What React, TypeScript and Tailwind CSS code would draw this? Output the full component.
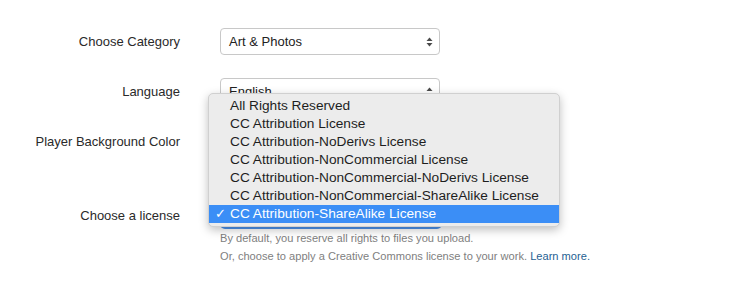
import React from "react";

function Arrows({ upOnly = false }: { upOnly?: boolean }) {
  return (
    <svg width="7" height="11" viewBox="0 0 7 11" className="absolute right-[6px] top-1/2 -translate-y-1/2">
      <path d="M3.5 1 L6.5 4.5 L0.5 4.5 Z" fill="#4a4a4a" />
      {!upOnly && <path d="M3.5 10 L6.5 6.5 L0.5 6.5 Z" fill="#4a4a4a" />}
    </svg>
  );
}

const items = [
  "All Rights Reserved",
  "CC Attribution License",
  "CC Attribution-NoDerivs License",
  "CC Attribution-NonCommercial License",
  "CC Attribution-NonCommercial-NoDerivs License",
  "CC Attribution-NonCommercial-ShareAlike License",
  "CC Attribution-ShareAlike License",
];

export default function App() {
  return (
    <div
      className="relative w-[747px] h-[292px] bg-white overflow-hidden text-[13px] text-[#2a2a2a]"
      style={{ fontFamily: '"Liberation Sans", Arial, sans-serif' }}
    >
      <div className="pt-[28px] flex flex-col">
        <div className="flex items-center h-[27px]">
          <div className="w-[180px] text-right">Choose Category</div>
          <div className="relative ml-[40px] w-[220px] h-[27px] border border-[#c8c8c8] rounded-[4px] bg-white flex items-center pl-[8px] text-[#222]">
            Art &amp; Photos
            <Arrows />
          </div>
        </div>
        <div className="flex items-center h-[27px] mt-[23px]">
          <div className="w-[180px] text-right">Language</div>
          <div className="relative ml-[40px] w-[220px] h-[27px] border border-[#c8c8c8] rounded-[4px] bg-white flex items-center pl-[8px] text-[#222]">
            English
            <Arrows />
          </div>
        </div>
        <div className="flex items-center h-[27px] mt-[23px]">
          <div className="w-[180px] text-right">Player Background Color</div>
          <div className="ml-[40px] w-[220px] h-[27px]" />
        </div>
        <div className="flex items-center h-[27px] mt-[47px]">
          <div className="w-[180px] text-right">Choose a license</div>
          <div className="relative ml-[40px] w-[222px] h-[27px] rounded-[5px] bg-[#4d93ec]" />
        </div>
        <div className="ml-[220px] text-[11.1px] leading-[18px] text-[#808080]">
          <div>By default, you reserve all rights to files you upload.</div>
          <div>
            Or, choose to apply a Creative Commons license to your work.{" "}
            <span className="text-[#1f5f93]">Learn more.</span>
          </div>
        </div>
      </div>

      <div className="absolute left-[208px] top-[93px] w-[352px] h-[134px] bg-[#ececec] rounded-[5px] border border-[#d0d0d0] shadow-[0_3px_10px_rgba(0,0,0,0.25)] pt-[3px] pb-[4px] flex flex-col">
        {items.map((t, i) => {
          const sel = i === items.length - 1;
          return (
            <div
              key={t}
              className={
                "relative h-[18px] leading-[18px] pl-[21px] text-[13.7px] whitespace-nowrap " +
                (sel ? "bg-[#3b8ef6] text-white" : "text-[#1e1e1e]")
              }
            >
              {sel && <span className="absolute left-[6px] top-0 text-[13px]">✓</span>}
              {t}
            </div>
          );
        })}
      </div>
    </div>
  );
}
